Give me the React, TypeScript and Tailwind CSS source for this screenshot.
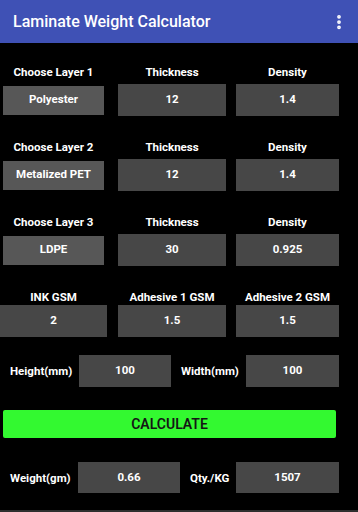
import { EllipsisVertical } from "lucide-react";

const LAYERS = [
  { label: "Choose Layer 1", material: "Polyester", thickness: "12", density: "1.4" },
  { label: "Choose Layer 2", material: "Metalized PET", thickness: "12", density: "1.4" },
  { label: "Choose Layer 3", material: "LDPE", thickness: "30", density: "0.925" },
];

function Box({ children, className = "" }: { children: React.ReactNode; className?: string }) {
  return (
    <div className={`flex items-center justify-center bg-[#474747] text-[11.5px] font-bold text-white ${className}`}>
      {children}
    </div>
  );
}

function Label({ children, className = "" }: { children: React.ReactNode; className?: string }) {
  return <div className={`text-[11.5px] font-bold leading-[14px] text-white ${className}`}>{children}</div>;
}

export default function App() {
  return (
    <div className="flex h-[512px] w-[358px] flex-col bg-black font-['Roboto',sans-serif]">
      {/* toolbar */}
      <div className="flex h-[43px] shrink-0 items-center justify-between bg-[#3f51b5] pl-[13px] pr-[10px]">
        <h1 className="text-[16px] font-medium text-white">Laminate Weight Calculator</h1>
        <EllipsisVertical className="h-[18px] w-[18px] text-white" strokeWidth={3} />
      </div>

      <div className="flex flex-1 flex-col border-b-2 border-[#2e2e2e] pt-[22px]">
        {/* layers */}
        {LAYERS.map((l, i) => (
          <div key={l.label} className={i > 0 ? "mt-[24px]" : ""}>
            <div className="flex">
              <Label className="w-[107px] text-center">{l.label}</Label>
              <Label className="ml-[11px] w-[108px] text-center">Thickness</Label>
              <Label className="ml-[10px] w-[103px] text-center">Density</Label>
            </div>
            <div className="mt-[5px] flex items-center">
              <div className="w-[107px] px-[3px]">
                <Box className="h-[29px] bg-[#575757]">{l.material}</Box>
              </div>
              <Box className="ml-[11px] h-[32px] w-[108px]">{l.thickness}</Box>
              <Box className="ml-[10px] h-[32px] w-[103px]">{l.density}</Box>
            </div>
          </div>
        ))}

        {/* gsm */}
        <div className="mt-[24px] flex">
          <Label className="w-[107px] text-center">INK GSM</Label>
          <Label className="ml-[11px] w-[108px] text-center">Adhesive 1 GSM</Label>
          <Label className="ml-[10px] w-[103px] text-center">Adhesive 2 GSM</Label>
        </div>
        <div className="mt-[1px] flex">
          <Box className="h-[32px] w-[107px]">2</Box>
          <Box className="ml-[11px] h-[32px] w-[108px]">1.5</Box>
          <Box className="ml-[10px] h-[32px] w-[103px]">1.5</Box>
        </div>

        {/* size */}
        <div className="mt-[18px] flex items-center pl-[10px]">
          <Label className="w-[69px]">Height(mm)</Label>
          <Box className="h-[32px] w-[92px]">100</Box>
          <Label className="ml-[10px] w-[65px]">Width(mm)</Label>
          <Box className="h-[32px] w-[93px]">100</Box>
        </div>

        <button className="ml-[3px] mt-[23px] flex h-[28px] w-[333px] items-center justify-center rounded-[2px] bg-[#33f930] text-[14px] font-semibold text-[#151515]">
          CALCULATE
        </button>

        {/* result */}
        <div className="mt-[24px] flex items-center pl-[10px]">
          <Label className="w-[68px]">Weight(gm)</Label>
          <Box className="h-[31px] w-[102px]">0.66</Box>
          <Label className="ml-[10px] w-[46px]">Qty./KG</Label>
          <Box className="h-[31px] w-[103px]">1507</Box>
        </div>
      </div>
    </div>
  );
}
